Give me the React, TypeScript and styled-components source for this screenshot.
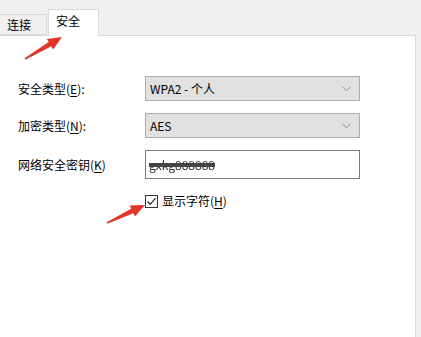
import React from 'react';
import styled, { createGlobalStyle } from 'styled-components';

const GlobalStyle = createGlobalStyle`
  html, body {
    margin: 0;
    padding: 0;
    background: #f0f0f0;
  }
  body {
    font-family: "Noto Sans CJK SC", "Noto Sans", sans-serif;
    font-size: 12px;
    color: #000;
  }
`;

const Window = styled.div`
  position: relative;
  width: 421px;
  height: 337px;
  overflow: hidden;
  display: flex;
  flex-direction: column;
  background: #f0f0f0;
  padding-right: 5px;
  box-sizing: border-box;
`;

const TabStrip = styled.div`
  height: 35px;
  display: flex;
  align-items: flex-end;
  gap: 1px;
  flex-shrink: 0;
`;

const Tab = styled.div<{ $active?: boolean }>`
  position: relative;
  z-index: ${(p) => (p.$active ? 2 : 1)};
  box-sizing: border-box;
  height: ${(p) => (p.$active ? '27px' : '21px')};
  width: ${(p) => (p.$active ? '51px' : '47px')};
  margin-bottom: ${(p) => (p.$active ? '-1px' : '0')};
  padding: ${(p) => (p.$active ? '3px 0 0 7px' : '2px 0 0 7px')};
  background: ${(p) => (p.$active ? '#ffffff' : '#f0f0f0')};
  border: 1px solid #d9d9d9;
  border-bottom: ${(p) => (p.$active ? 'none' : '1px solid #d9d9d9')};
  border-left: ${(p) => (p.$active ? '1px solid #d9d9d9' : 'none')};
  line-height: 16px;
`;

const Panel = styled.div`
  flex: 1;
  background: #ffffff;
  border-top: 1px solid #d9d9d9;
  border-right: 1px solid #d9d9d9;
  padding: 40px 0 0 18px;
`;

const Form = styled.div`
  display: grid;
  grid-template-columns: 127px 215px;
  grid-template-rows: 25px 25px 29px;
  row-gap: 12px;
  align-items: center;
`;

const Label = styled.div`
  line-height: 16px;
  white-space: nowrap;
`;

const Key = styled.span`
  text-decoration: underline;
  text-underline-offset: 2px;
`;

const Select = styled.div`
  box-sizing: border-box;
  height: 25px;
  display: flex;
  align-items: center;
  justify-content: space-between;
  padding: 0 8px 0 4px;
  background: #e1e1e1;
  border: 1px solid #adadad;
`;

const Chevron = () => (
  <svg width="9" height="6" viewBox="0 0 9 6">
    <polyline points="0.5,0.8 4.5,4.8 8.5,0.8" fill="none" stroke="#8a8a8a" strokeWidth="1" />
  </svg>
);

const Input = styled.div`
  box-sizing: border-box;
  height: 29px;
  display: flex;
  align-items: center;
  padding: 0 3px;
  background: #ffffff;
  border: 1px solid #7a7a7a;
`;

const Secret = styled.span`
  color: #333;
  filter: blur(0.7px);
  text-decoration: line-through;
  text-decoration-thickness: 4px;
  text-decoration-color: #444;
`;

const CheckRow = styled.label`
  display: flex;
  align-items: center;
  gap: 4px;
  margin: 14px 0 0 127px;
  line-height: 16px;
`;

const Box = styled.span`
  box-sizing: border-box;
  width: 13px;
  height: 13px;
  border: 1px solid #333;
  background: #fff;
  display: flex;
  align-items: center;
  justify-content: center;
`;

const Arrows = styled.svg`
  position: absolute;
  left: 0;
  top: 0;
  pointer-events: none;
  z-index: 5;
`;

export default function App() {
  return (
    <>
      <GlobalStyle />
      <Window>
        <TabStrip>
          <Tab>连接</Tab>
          <Tab $active>安全</Tab>
        </TabStrip>
        <Panel>
          <Form>
            <Label>
              安全类型(<Key>E</Key>):
            </Label>
            <Select>
              <span>WPA2 - 个人</span>
              <Chevron />
            </Select>
            <Label>
              加密类型(<Key>N</Key>):
            </Label>
            <Select>
              <span>AES</span>
              <Chevron />
            </Select>
            <Label>
              网络安全密钥(<Key>K</Key>)
            </Label>
            <Input>
              <Secret>gxkg888888</Secret>
            </Input>
          </Form>
          <CheckRow>
            <Box>
              <svg width="11" height="11" viewBox="0 0 11 11">
                <polyline points="1.5,5.5 4.2,8.3 9.5,2.2" fill="none" stroke="#222" strokeWidth="1.2" />
              </svg>
            </Box>
            <span>
              显示字符(<Key>H</Key>)
            </span>
          </CheckRow>
        </Panel>
        <Arrows width="421" height="337" viewBox="0 0 421 337">
          <polygon
            fill="#e2352a"
            points="24.6,58.3 48.7,42.0 46.9,39.0 62,37 53.1,49.4 51.3,46.3 25.4,59.7"
          />
          <polygon
            fill="#e2352a"
            points="106.7,222.3 131.2,208.7 129.7,205.6 145,205 134.9,216.4 133.4,213.3 107.3,223.7"
          />
        </Arrows>
      </Window>
    </>
  );
}
